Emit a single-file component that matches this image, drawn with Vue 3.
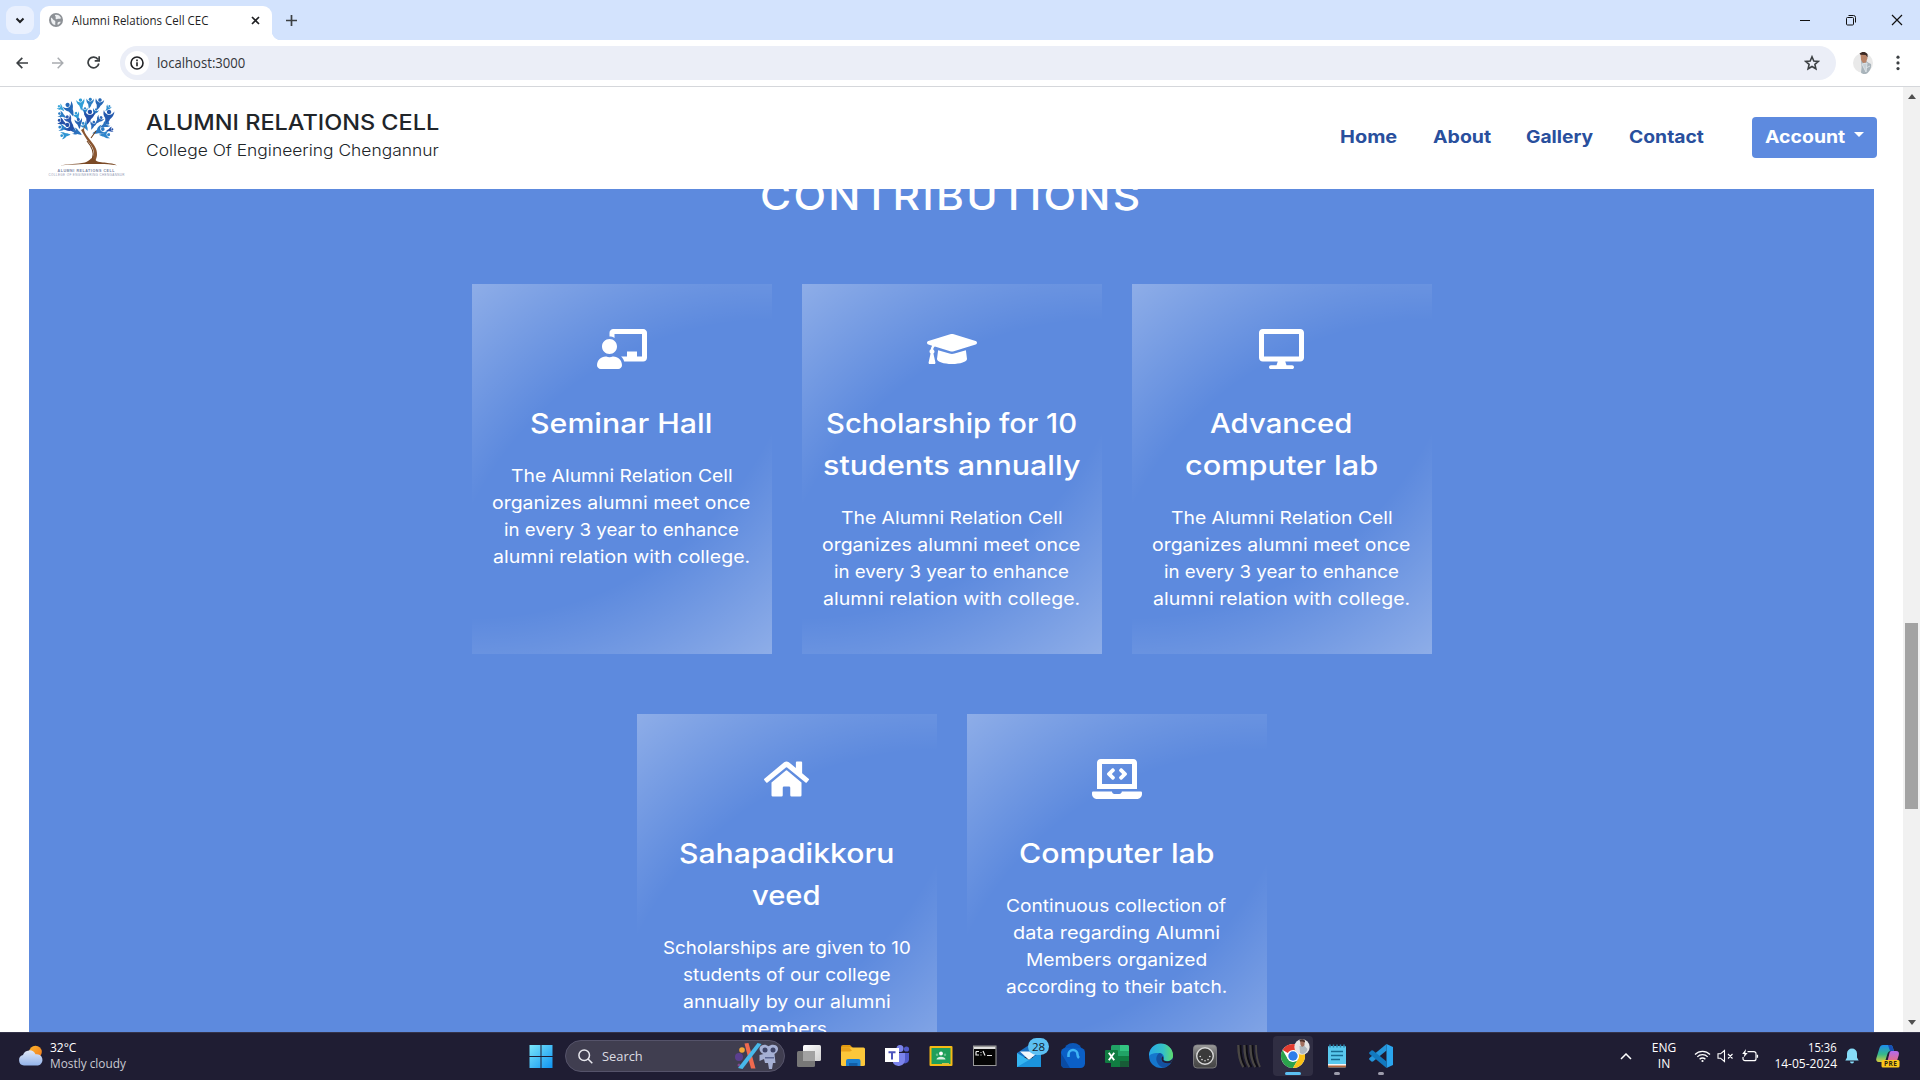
<script setup>
// Stretches a line of text horizontally to a given width
const vFit = {
  mounted(el, { value }) {
    const natural = el.offsetWidth
    if (!natural || !value) return
    el.style.transform = `scaleX(${value / natural})`
    el.style.marginRight = `${value - natural}px`
  },
}

const links = [
  { label: 'Home', w: 57 },
  { label: 'About', w: 58 },
  { label: 'Gallery', w: 67 },
  { label: 'Contact', w: 75 },
]

const alumniMeet = [
  { t: 'The Alumni Relation Cell', w: 222 },
  { t: 'organizes alumni meet once', w: 258 },
  { t: 'in every 3 year to enhance', w: 235 },
  { t: 'alumni relation with college.', w: 257 },
]

const rows = [
  [
    {
      vw: 640,
      icon: 'M208 352c-2.39 0-4.78.35-7.06 1.09C187.98 357.3 174.35 360 160 360c-14.35 0-27.98-2.7-40.95-6.91-2.28-.74-4.66-1.09-7.05-1.09C49.94 352-.33 402.48 0 464.62.14 490.88 21.73 512 48 512h224c26.27 0 47.86-21.12 48-47.38.33-62.14-49.94-112.62-112-112.62zm-48-32c53.02 0 96-42.98 96-96s-42.98-96-96-96-96 42.98-96 96 42.98 96 96 96zM592 0H208c-26.47 0-48 22.25-48 49.59V96c23.42 0 45.1 6.78 64 17.8V64h352v288h-64v-64H384v64h-76.24c19.1 16.69 33.12 38.73 39.69 64H592c26.47 0 48-22.25 48-49.59V49.59C640 22.25 618.47 0 592 0z',
      title: [{ t: 'Seminar Hall', w: 182 }],
      text: alumniMeet,
    },
    {
      vw: 640,
      icon: 'M622.34 153.2L343.4 67.5c-15.2-4.67-31.6-4.67-46.79 0L17.66 153.2c-23.54 7.23-23.54 38.36 0 45.59l48.63 14.94c-10.67 13.19-17.23 29.28-17.88 46.9C38.78 266.15 32 276.11 32 288c0 10.78 5.68 19.85 13.86 25.65L20.33 428.53C18.11 438.52 25.71 448 35.94 448h56.11c10.24 0 17.84-9.48 15.62-19.47L82.14 313.65C90.32 307.85 96 298.78 96 288c0-11.57-6.47-21.25-15.66-26.87.76-15.02 8.44-28.3 20.69-36.72L296.6 284.5c9.06 2.78 26.44 6.25 46.79 0l278.95-85.7c23.55-7.24 23.55-38.36 0-45.6zM352.79 315.09c-28.53 8.76-52.84 3.92-65.59 0l-145.02-44.55L128 384c0 35.35 85.96 64 192 64s192-28.65 192-64l-14.18-113.47-145.03 44.56z',
      title: [{ t: 'Scholarship for 10', w: 251 }, { t: 'students annually', w: 257 }],
      text: alumniMeet,
    },
    {
      vw: 576,
      icon: 'M528 0H48C21.5 0 0 21.5 0 48v320c0 26.5 21.5 48 48 48h192l-16 48h-72c-13.3 0-24 10.7-24 24s10.7 24 24 24h272c13.3 0 24-10.7 24-24s-10.7-24-24-24h-72l-16-48h192c26.5 0 48-21.5 48-48V48c0-26.5-21.5-48-48-48zm-16 352H64V64h448v288z',
      title: [{ t: 'Advanced', w: 142 }, { t: 'computer lab', w: 193 }],
      text: alumniMeet,
    },
  ],
  [
    {
      vw: 576,
      icon: 'M280.37 148.26L96 300.11V464a16 16 0 0 0 16 16l112.06-.29a16 16 0 0 0 15.92-16V368a16 16 0 0 1 16-16h64a16 16 0 0 1 16 16v95.64a16 16 0 0 0 16 16.05L464 480a16 16 0 0 0 16-16V300L295.67 148.26a12.19 12.19 0 0 0-15.3 0zM571.6 251.47L488 182.56V44.05a12 12 0 0 0-12-12h-56a12 12 0 0 0-12 12v72.61L318.47 43a48 48 0 0 0-61 0L4.34 251.47a12 12 0 0 0-1.6 16.9l25.5 31A12 12 0 0 0 45.15 301l235.22-193.74a12.19 12.19 0 0 1 15.3 0L530.9 301a12 12 0 0 0 16.9-1.6l25.5-31a12 12 0 0 0-1.7-16.93z',
      title: [{ t: 'Sahapadikkoru', w: 215 }, { t: 'veed', w: 69 }],
      text: [
        { t: 'Scholarships are given to 10', w: 248 },
        { t: 'students of our college', w: 208 },
        { t: 'annually by our alumni', w: 208 },
        { t: 'members.', w: 92 },
      ],
    },
    {
      vw: 640,
      icon: 'M255.03 261.65c6.25 6.25 16.38 6.25 22.63 0l11.31-11.31c6.25-6.25 6.25-16.38 0-22.63L253.25 192l35.71-35.72c6.25-6.25 6.25-16.38 0-22.63l-11.31-11.31c-6.25-6.25-16.38-6.25-22.63 0l-58.34 58.34c-6.25 6.25-6.25 16.38 0 22.63l58.35 58.34zm96.01-11.3l11.31 11.31c6.25 6.25 16.38 6.25 22.63 0l58.34-58.34c6.25-6.25 6.25-16.38 0-22.63l-58.34-58.34c-6.25-6.25-16.38-6.25-22.63 0l-11.31 11.31c-6.25 6.25-6.25 16.38 0 22.63L386.75 192l-35.71 35.72c-6.25 6.25-6.25 16.38 0 22.63zM624 416H381.54c-.74 19.81-14.71 32-32.74 32H288c-18.69 0-33.02-17.47-32.77-32H16c-8.8 0-16 7.2-16 16v16c0 35.2 28.8 64 64 64h512c35.2 0 64-28.8 64-64v-16c0-8.8-7.2-16-16-16zM576 48c0-26.4-21.6-48-48-48H112C85.6 0 64 21.6 64 48v336h512V48zm-64 272H128V64h384v256z',
      title: [{ t: 'Computer lab', w: 196 }],
      text: [
        { t: 'Continuous collection of', w: 220 },
        { t: 'data regarding Alumni', w: 207 },
        { t: 'Members organized', w: 181 },
        { t: 'according to their batch.', w: 221 },
      ],
    },
  ],
]

// Leaf figures of the logo: x, y, rotation, scale, colour
const leaves = [
  [33, 8, -8, 1.3, '#2f9fd8'], [42, 7, 5, 1.2, '#2b7fc4'], [51, 8, 14, 1.35, '#2767b5'],
  [22, 13, -30, 1.6, '#2569b8'], [13, 12, -50, 0.9, '#37a5da'], [60, 12, 35, 0.8, '#2f8fd0'],
  [14, 19, -60, 1, '#2b7cc4'], [37, 15, 0, 0.9, '#2d89cc'], [47, 16, 25, 0.9, '#2c79c2'],
  [41, 21, 10, 1.7, '#2450a8'], [29, 20, -20, 1, '#2d9bd6'], [60, 21, 12, 1.7, '#2459ae'],
  [21, 24, -30, 1.2, '#2c5bb0'], [14, 26, -60, 1.1, '#2450a8'], [51, 24, 40, 1.1, '#2b68b8'],
  [31, 27, -10, 1.2, '#2763b4'], [37, 30, -35, 1.1, '#2d87cc'], [45, 29, 15, 1, '#2a6abb'],
  [15, 32, -75, 1.1, '#2c83ca'], [23, 32, -50, 1.6, '#2450a8'], [29, 36, -65, 1.1, '#2b73bf'],
  [17, 39, -100, 1.1, '#2f95d3'], [57, 29, 60, 1.1, '#2b73bf'], [51, 35, 65, 1.4, '#2c7bc4'],
  [57, 39, 85, 1.2, '#2f86cc'], [62, 34, 75, 0.8, '#2450a8'],
]
</script>

<template>
  <div class="screen">
    <div class="tabstrip">
      <div class="tab-search">
        <svg width="10" height="7" viewBox="0 0 10 7"><path d="M1.5 1.5 5 5l3.500-3.500" fill="none" stroke="#202124" stroke-width="2" /></svg>
      </div>
      <div class="tab">
        <svg class="globe" width="14" height="14" viewBox="0 0 14 14">
          <circle cx="7" cy="7" r="7" fill="#8d9196" />
          <path d="M2 4.500c2 1 2 2.500 3.500 3s.5 2 .8 4.500C3.500 12 1.600 9 2 4.500zM6 2c2.500-.8 5 .5 6 3-1 1.500-2.500.2-3.600 1-1.200.8-2.200-.3-1.700-1.400C7.400 3.300 5.400 3 6 2zM8.500 10c.5-1.300 2-1.500 3.300-1.300C11 10.500 10 11.300 8.700 12z" fill="#eef0f2" />
        </svg>
        <div class="tab-title"><span v-fit="136" class="fit">Alumni Relations Cell CEC</span></div>
        <svg class="tab-close" width="9" height="9" viewBox="0 0 9 9"><path d="m1 1 7 7m0-7L1 8" stroke="#202124" stroke-width="1.700" /></svg>
      </div>
      <svg class="new-tab" width="11" height="11" viewBox="0 0 11 11"><path d="M5.500 0v11M0 5.500h11" stroke="#3c4043" stroke-width="1.700" /></svg>
      <div class="win">
        <svg width="12" height="12" viewBox="0 0 12 12"><path d="M1 6.500h10" stroke="#111" /></svg>
        <svg width="12" height="12" viewBox="0 0 12 12" fill="none" stroke="#111"><rect x="1.500" y="3.500" width="7" height="7.500" rx="1" /><path d="M3.500 1.500H8.500a2 2 0 0 1 2 2V8.500" /></svg>
        <svg width="12" height="12" viewBox="0 0 12 12"><path d="m1 1 10 10m0-10L1 11" stroke="#111" stroke-width="1.200" /></svg>
      </div>
    </div>

    <div class="toolbar">
      <svg width="12" height="12" viewBox="0 0 12 12" fill="none" stroke="#3c4043" stroke-width="1.700"><path d="M12 6H1.200M6.300.8 1.200 6l5.100 5.200" /></svg>
      <svg class="fwd" width="12" height="12" viewBox="0 0 12 12" fill="none" stroke="#a9acb0" stroke-width="1.500"><path d="M0 6h10.800M5.700.8 10.800 6l-5.100 5.200" /></svg>
      <svg class="reload" width="13" height="13" viewBox="0 0 13 13" fill="none" stroke="#3c4043" stroke-width="1.700"><path d="M11.800 7.500A5.400 5.400 0 1 1 11 3.500M12.200.3v4.500H7.700" /></svg>
      <div class="omnibox">
        <div class="info">
          <svg width="14" height="14" viewBox="0 0 14 14"><circle cx="7" cy="7" r="6" fill="none" stroke="#202124" stroke-width="1.600" /><path d="M6.200 6.200h1.600v4H6.200zM6.200 3.600h1.600v1.600H6.200z" fill="#202124" /></svg>
        </div>
        <div class="url"><span v-fit="88" class="fit">localhost:3000</span></div>
        <svg class="star" width="16" height="16" viewBox="0 0 16 16"><path d="m8 1.800 1.800 4.200 4.500.4-3.400 3 1 4.400L8 11.500l-3.900 2.300 1-4.400-3.400-3 4.500-.4z" fill="none" stroke="#3c4043" stroke-width="1.600" /></svg>
      </div>
      <svg class="avatar" width="22" height="24" viewBox="0 0 22 24">
        <circle cx="11" cy="12" r="10" fill="#e9e9e9" />
        <path d="M9 9.500 13 9l3 2.500 3 1.500c.7 4-1.500 7.500-4 9.500-3 1-5 .5-6-1l.6-5z" fill="#a9b4bb" />
        <path d="m10 13 5-1-1 9zM14 17l4-2" stroke="#dbe1e5" stroke-width="1" fill="#c7d0d6" />
        <path d="M8.500 3h5.500l1.500 4-1.500 4.500-3 .5-2-3z" fill="#b98468" />
        <path d="M7.500 2.500c2-2 6-2.300 8 .5l.2 3.500-2-2.500-5.200-.3z" fill="#3d2a24" />
      </svg>
      <svg class="kebab" width="4" height="16" viewBox="0 0 4 16" fill="#3c4043"><circle cx="2" cy="2.200" r="1.600" /><circle cx="2" cy="7.900" r="1.600" /><circle cx="2" cy="13.600" r="1.600" /></svg>
    </div>

    <div class="viewport">
      <div class="page">
        <header class="site-header">
          <svg class="logo" width="78" height="84" viewBox="0 0 78 84">
            <g v-for="(l, i) in leaves" :key="i" :transform="`translate(${l[0]} ${l[1]}) rotate(${l[2]}) scale(${l[3]})`" :fill="l[4]">
              <circle cx="0" cy="-3" r="1.300" />
              <path d="M-3.200-3.500C-2.400-1.800-1.200-1.400 0-1.200 1.300-1.500 2.400-2.500 3-4 3.300-1.200 2 .2 1.400 1 1.200 2.500.4 3.800-.6 5-.9 3.300-1.200 2-1.500.9-2.700 0-3.400-1.500-3.200-3.500z" />
            </g>
            <path d="M33 34c3 5 5 9 8 12.500 4 4.500 6 9.500 4 14-1 3-3.500 5-6 7h8c-.5-2 2-5 2-9 .3-6-3.500-10-6.500-14C39.500 40.500 37 38 36 34l1-5-1.600 3.500z" fill="#8a5630" />
            <path d="M39 45c5 6 7.500 12 5.500 17-.8 2.500-2 4-3.500 5.500M43 42l5-7" fill="none" stroke="#6f411f" stroke-width="1.100" />
            <path d="M12 69.500c8-1.800 17-1.300 25-3 2.500-.8 4.500-2.500 6-4 1.500 0 3 0 4 1 2 3 7 2.600 11 3.300 4 .6 8 .9 11 2.400-8-1-14-1.500-20-1.200-13-.2-25 .3-37 1.500z" fill="#7b4a26" />
            <text x="9.500" y="75.500" textLength="57" font-size="3.600" font-weight="700" fill="#7684a6">ALUMNI RELATIONS CELL</text>
            <text x="0.500" y="80" textLength="76" font-size="3" fill="#8f97b2">COLLEGE OF ENGINEERING CHENGANNUR</text>
          </svg>
          <div class="brand">
            <div class="brand-name"><span v-fit="293" class="fit">ALUMNI RELATIONS CELL</span></div>
            <div class="brand-sub"><span v-fit="293" class="fit">College Of Engineering Chengannur</span></div>
          </div>
          <nav>
            <a v-for="l in links" :key="l.label"><span v-fit="l.w" class="fit">{{ l.label }}</span></a>
          </nav>
          <button class="account"><span v-fit="80" class="fit">Account</span><i class="caret"></i></button>
        </header>
        <main>
          <section class="contributions">
            <h2><span v-fit="382" class="fit">CONTRIBUTIONS</span></h2>
            <div v-for="(row, r) in rows" :key="r" class="row">
              <article v-for="(c, i) in row" :key="i" class="card">
                <svg class="card-icon" :width="c.vw / 12.8" height="40" :viewBox="`0 0 ${c.vw} 512`"><path :d="c.icon" fill="#fff" /></svg>
                <h3><div v-for="l in c.title" :key="l.t"><span v-fit="l.w" class="fit">{{ l.t }}</span></div></h3>
                <div class="copy"><div v-for="l in c.text" :key="l.t"><span v-fit="l.w" class="fit">{{ l.t }}</span></div></div>
              </article>
            </div>
          </section>
        </main>
      </div>
      <div class="scrollbar">
        <svg width="8" height="5" viewBox="0 0 8 5"><path d="M4 0l4 5H0z" fill="#505050" /></svg>
        <div class="track"><div class="thumb"></div></div>
        <svg width="8" height="5" viewBox="0 0 8 5"><path d="M4 5 0 0h8z" fill="#505050" /></svg>
      </div>
    </div>

    <div class="taskbar">
      <div class="weather">
        <svg width="26" height="22" viewBox="0 0 26 22">
          <defs>
            <linearGradient id="cloud" x1="0" y1="0" x2="0" y2="1"><stop offset="0" stop-color="#dfe8f8" /><stop offset="1" stop-color="#93b3ea" /></linearGradient>
            <linearGradient id="sun" x1="0" y1="0" x2="1" y2="1"><stop offset="0" stop-color="#fdb62c" /><stop offset="1" stop-color="#f0781e" /></linearGradient>
          </defs>
          <circle cx="17.500" cy="7" r="6.300" fill="url(#sun)" />
          <path d="M6 20.500a5.300 5.300 0 0 1-1-10.400 6.700 6.700 0 0 1 12.500-.8 5.700 5.700 0 0 1 2.500 11.200z" fill="url(#cloud)" />
        </svg>
        <div class="weather-text">
          <div><span v-fit="26" class="fit">32°C</span></div>
          <div class="dim"><span v-fit="76" class="fit">Mostly cloudy</span></div>
        </div>
      </div>

      <svg class="start" width="24" height="24" viewBox="0 0 24 24">
        <defs><linearGradient id="win" x1="0" y1="0" x2="1" y2="1"><stop offset="0" stop-color="#7be7fb" /><stop offset="1" stop-color="#0f93f0" /></linearGradient></defs>
        <path d="M0.500 1h11v11h-11zM12.500 1h11v11h-11zM0.500 13h11v11h-11zM12.500 13h11v11h-11z" fill="url(#win)" />
      </svg>

      <div class="search">
        <svg width="15" height="15" viewBox="0 0 15 15" fill="none" stroke="#e8e8ee" stroke-width="1.500"><circle cx="6.200" cy="6.200" r="5.300" /><path d="m10 10 4.300 4.300" /></svg>
        <div class="search-label"><span v-fit="41" class="fit">Search</span></div>
        <svg class="doodle" width="46" height="28" viewBox="0 0 46 28">
          <circle cx="8" cy="8" r="2.800" fill="#f3a83a" /><circle cx="5" cy="15" r="4" fill="#5b3f8f" /><circle cx="5" cy="23" r="1.500" fill="#7d4b8c" />
          <path d="m10.500 1.500 4-.5 7 25.500h-4.500z" fill="#f0694f" />
          <path d="m23.500 1 4 1L8.500 27 4 26z" fill="#48b9ea" />
          <path d="M26 5c2-3 6-3 8.500-.8C37 2 42 2 43.500 5c1.500 3-.5 6-3 7l1 9H31l-1-4-4.500 2v-6l4-1c-3-1-5-4-3.500-7zM34 21h5l-1 6h-3z" fill="#a6b0d4" />
          <circle cx="31" cy="8" r="2.500" fill="#3e4468" /><circle cx="39" cy="8" r="2.500" fill="#3e4468" /><path d="M31 15h9v1.500h-9z" fill="#5d6794" />
        </svg>
      </div>

      <div class="apps">
        <div class="app"><svg width="26" height="26" viewBox="0 0 26 26"><defs><linearGradient id="tv" x1="0" y1="0" x2="1" y2="1"><stop offset="0" stop-color="#fff" /><stop offset="1" stop-color="#cfcfcf" /></linearGradient></defs><rect x="7" y="2" width="18" height="16" rx="1.500" fill="url(#tv)" /><rect x="1" y="8" width="18" height="16" rx="1.500" fill="#777" /><path d="M7 8h12v10H7z" fill="#a2a2a2" /></svg></div>
        <div class="app"><svg width="26" height="26" viewBox="0 0 26 26"><path d="M1 4a2 2 0 0 1 2-2h7l3 3h-2v5H1z" fill="#e39a10" /><rect x="1" y="4.500" width="24" height="18.500" rx="1.500" fill="#fcc73a" /><path d="M1 4.500h8l3 3-2 1H1z" fill="#e9a21b" /><path d="M6 23v-5a2 2 0 0 1 2-2h10.500a2 2 0 0 1 2 2v5z" fill="#1c7fd0" /><path d="M9 20h8.500v3H9z" fill="#125fa8" /></svg></div>
        <div class="app"><svg width="26" height="26" viewBox="0 0 26 26"><circle cx="16" cy="5.500" r="3.500" fill="#7b83eb" /><circle cx="22.500" cy="6" r="2.600" fill="#5059c9" /><path d="M18 10h7v6.500a4 4 0 0 1-5 3.800z" fill="#5059c9" /><path d="M9 10h12v7a6.500 6.500 0 0 1-12 3z" fill="#7b83eb" /><rect x="1" y="5" width="14" height="14" fill="#fff" /><path d="M4.500 8.200h7v2H9v6.300H7v-6.300H4.500z" fill="#4b53bc" /></svg></div>
        <div class="app"><svg width="26" height="26" viewBox="0 0 26 26"><rect x="1.500" y="3" width="23" height="20" rx="1" fill="#f5ba15" /><rect x="3.500" y="5" width="19" height="16" fill="#1f9f5b" /><circle cx="13" cy="10.500" r="1.900" fill="#fff" /><circle cx="9" cy="11.800" r="1.200" fill="#6cc191" /><circle cx="17" cy="11.800" r="1.200" fill="#6cc191" /><path d="M8.500 16.500c0-2 2.500-2.800 4.500-2.800s4.500.8 4.500 2.800z" fill="#d9f0e2" /><path d="M14 20h7v1.500h-7z" fill="#d3c14a" /></svg></div>
        <div class="app"><svg width="26" height="26" viewBox="0 0 26 26"><rect x="1.500" y="3" width="22.500" height="19.500" fill="#050505" stroke="#9a9a9a" /><path d="M2 3.500h21.500v2.500H2z" fill="#dedede" /><path d="M4 8.500h3M4 8.500v3.500h3M8.500 9.500h1M8.500 12h1M11 8l2 4.500M15 12.500h5" stroke="#e8e8e8" stroke-width="1.200" fill="none" /></svg></div>
        <div class="app"><svg width="26" height="26" viewBox="0 0 26 26"><path d="m1 10 12-8 12 8v4H1z" fill="#1a6fc0" /><path d="M4 8.500h19L13 17z" fill="#f2f7fc" /><path d="M1 10l12 7 12-7v14H1z" fill="#35b5f1" /><path d="M1 24 25 10v14z" fill="#1b93dc" /></svg><span class="badge">28</span></div>
        <div class="app"><svg width="26" height="26" viewBox="0 0 26 26"><path d="M4 8a9 8 0 0 1 18 0" fill="#0b57b8" /><rect x="1" y="5" width="24" height="20" rx="4.500" fill="#0b5fc6" /><path d="M1 10l9 15H5a4 4 0 0 1-4-4z" fill="#0a4ba3" /><path d="M8.500 14v-2.500a4.500 4.500 0 0 1 9 0c0 2 1 3 1.500 3.500" fill="none" stroke="#3fb4f5" stroke-width="2.600" /></svg></div>
        <div class="app"><svg width="26" height="26" viewBox="0 0 26 26"><rect x="7" y="2" width="18" height="22" rx="1.500" fill="#21a366" /><path d="M16 2h7.500A1.500 1.500 0 0 1 25 3.500V8h-9z" fill="#33c481" /><path d="M7 13h9v11H8.500A1.500 1.500 0 0 1 7 22.500zM16 13h9v5h-9z" fill="#107c41" /><path d="M16 18h9v4.500a1.500 1.500 0 0 1-1.500 1.500H16z" fill="#185c37" /><rect x="1" y="7" width="13" height="13" rx="1" fill="#107c41" /><path d="m4.800 9.700 5.400 7.600m0-7.600-5.400 7.600" stroke="#fff" stroke-width="1.900" /></svg></div>
        <div class="app"><svg width="26" height="26" viewBox="0 0 26 26"><defs><linearGradient id="eg" x1="0" y1="0" x2="1" y2="0"><stop offset="0" stop-color="#28a9e8" /><stop offset=".6" stop-color="#35c1c6" /><stop offset="1" stop-color="#5fdc6a" /></linearGradient></defs><circle cx="13" cy="13" r="12" fill="#1577cd" /><path d="M1 13A12 12 0 0 1 25 12c.3 4-2.500 6-6 6-2.500 0-4-1-3.500-2 1.500-2 0-5.500-4-6C6.500 9.500 2 11 1 13z" fill="url(#eg)" /><path d="M11.500 10c-3 2-4 5.500-2.500 9 1.200 3 4 5.500 7 5.600 3-.6 5.500-2.600 7-5.100-3.500 1.500-8 1-9.500-1.500-1-2-.5-4 1-5.500-.5-1.500-1.500-2.300-3-2.500z" fill="#1451a0" /><path d="M15.500 16c-.5 1 1 2.500 4 2.300 2.500-.3 4.500-1.500 5.300-3.300-.3 2-1 3.500-2 4.700-4 1.300-8.500.5-9.300-2.700-.3-2 .2-3.200 1.200-3.800.8 1 .9 2 .8 2.800z" fill="#241f36" /></svg></div>
        <div class="app"><svg width="26" height="26" viewBox="0 0 26 26"><defs><linearGradient id="din" x1="0" y1="0" x2="0" y2="1"><stop offset="0" stop-color="#9c9c9c" /><stop offset=".5" stop-color="#5c5c5c" /><stop offset="1" stop-color="#444" /></linearGradient></defs><rect x="1.500" y="2" width="23" height="23" rx="3.500" fill="url(#din)" stroke="#888" stroke-width=".8" /><circle cx="13" cy="13" r="8.300" fill="#3a3a3a" stroke="#d8d8d8" stroke-width="1.400" /><g fill="#e0e0e0"><circle cx="8.200" cy="13.500" r=".8" /><circle cx="17.800" cy="13.500" r=".8" /><circle cx="10" cy="16.600" r=".8" /><circle cx="16" cy="16.600" r=".8" /><circle cx="13" cy="17.800" r=".8" /></g></svg></div>
        <div class="app"><svg width="26" height="26" viewBox="0 0 26 26" fill="none" stroke="#4a4744" stroke-width="2.600"><path d="M2.500 2c0 8 .5 15 5 22M8.500 2c0 8 .5 15 5 22M14.500 2c0 8 .5 15 5 22" /><path d="M20 2c0 8 .5 15 4 22" stroke-width="1.800" /><g stroke="#0d0c12" stroke-width="1.800"><path d="M4.500 2c0 8 .5 15 5 22M10.500 2c0 8 .5 15 5 22M16.500 2c0 8 .5 15 5 22" /></g></svg></div>
        <div class="app active">
          <svg width="26" height="26" viewBox="0 0 26 26"><circle cx="13" cy="13" r="12" fill="#fff" /><path d="M13 13 2.600 7A12 12 0 0 1 23.400 7H13z" fill="#e33b2e" /><path d="M2.600 7A12 12 0 0 0 13 25l5.200-9-5.200 3-5.200-3z" fill="#2ba24c" /><path d="M23.400 7A12 12 0 0 1 13 25l5.200-9L18.200 10 13 7z" fill="#fbc116" /><circle cx="13" cy="13" r="6" fill="#fff" /><circle cx="13" cy="13" r="4.700" fill="#2f7de9" /></svg>
          <svg class="profile" width="16" height="16" viewBox="0 0 16 16"><circle cx="8" cy="8" r="7.700" fill="#e6e4e4" /><path d="M5.500 7h5l3 3c-.5 3-3 5-5.500 5l-2-1z" fill="#b0b8bf" /><path d="M6 1.500h4.500v5L8 8 6.500 6z" fill="#a26f5e" /><path d="M5.500 1.200C7-.2 10 0 11 2v1.500L8.500 2.500H6z" fill="#4d322c" /></svg>
          <i class="mark wide"></i>
        </div>
        <div class="app"><svg width="26" height="26" viewBox="0 0 26 26"><rect x="4" y="3" width="18" height="21.500" rx="1" fill="#59c8ee" /><path d="M4 22h18v1.500a1 1 0 0 1-1 1H5a1 1 0 0 1-1-1z" fill="#b5653a" /><path d="M4 21h18v1.500H4z" fill="#f6f6f6" /><path d="M7 8.500h12M7 12.500h12M7 16.500h9" stroke="#176b93" stroke-width="1.600" /><path d="M6 1.500v3M9.500 1.500v3M13 1.500v3M16.500 1.500v3M20 1.500v3" stroke="#2c86ad" stroke-width="1.500" /></svg><i class="mark"></i></div>
        <div class="app"><svg width="26" height="26" viewBox="0 0 26 26"><path d="M18.500 1 25 4v18l-6.500 3z" fill="#2aa5ee" /><path d="M18.500 1v6.500L5 18.500l-1.200.2L1.200 16.500v-1.200z" fill="#2496dc" /><path d="M18.500 25v-6.500L5 7.500l-1.200-.2L1.200 9.500v1.200z" fill="#1279bf" /></svg><i class="mark"></i></div>
      </div>

      <div class="tray">
        <svg class="chev" width="12" height="7" viewBox="0 0 12 7"><path d="m1 6 5-5 5 5" fill="none" stroke="#fff" stroke-width="1.500" /></svg>
        <div class="lang"><div><span v-fit="24" class="fit">ENG</span></div><div><span v-fit="12" class="fit">IN</span></div></div>
        <svg class="wifi" width="17" height="14" viewBox="0 0 17 14" fill="none" stroke="#fff" stroke-width="1.300"><path d="M1 5.500a10.500 10.500 0 0 1 15 0M3.300 7.900a7.300 7.300 0 0 1 10.400 0M5.600 10.200a4.100 4.100 0 0 1 5.800 0" /><circle cx="8.500" cy="12" r="1.100" fill="#fff" stroke="none" /></svg>
        <svg class="vol" width="17" height="14" viewBox="0 0 17 14" fill="none" stroke="#fff" stroke-width="1.100"><path d="M1 4.800h2.500L7.500 1.500v11L3.500 9.200H1zM11 5l4.500 4.500m0-4.500L11 9.500" /></svg>
        <svg class="bat" width="18" height="14" viewBox="0 0 18 14" fill="none" stroke="#fff" stroke-width="1.200"><path d="M6.500 2.700H13A2 2 0 0 1 15 4.700v5a2 2 0 0 1-2 2H4a2 2 0 0 1-2-2V8M16.500 5.700v3" /><path d="M5 0 1.200 5h2.300L2.700 8.500 6.700 4H4.300z" fill="#fff" stroke="none" /></svg>
        <div class="clock"><div><span v-fit="29" class="fit">15:36</span></div><div><span v-fit="63" class="fit">14-05-2024</span></div></div>
        <svg class="bell" width="14" height="16" viewBox="0 0 14 16"><path d="M7 .5a5 5 0 0 1 5 5v4l1.700 3H.3l1.700-3v-4a5 5 0 0 1 5-5zM5 13.500h4a2 2 0 0 1-4 0z" fill="#86dcf8" /></svg>
        <svg class="copilot" width="26" height="25" viewBox="0 0 26 25">
          <defs>
            <linearGradient id="cpa" x1="0" y1="0" x2="0" y2="1"><stop offset="0" stop-color="#1d8df0" /><stop offset=".55" stop-color="#36b98a" /><stop offset="1" stop-color="#d9cf3c" /></linearGradient>
            <linearGradient id="cpb" x1="0" y1="0" x2="0" y2="1"><stop offset="0" stop-color="#b26af0" /><stop offset="1" stop-color="#f0706c" /></linearGradient>
          </defs>
          <path d="M8 1h7c2 0 2.500 1.200 3 3l1 3h-3c-2 0-3 1-3.600 3l-1.700 5.500c-.5 1.500-1.200 2.500-3 2.500H4c-2.500 0-3.300-1.700-2.600-4L4.500 4C5.200 2 6.200 1 8 1z" fill="url(#cpa)" />
          <path d="M13 1h2c2 0 2.500 1.200 3 3l1 3h-4z" fill="#174fb5" />
          <path d="M16.500 7H21c2.500 0 3.400 1.500 2.800 4l-2.500 8H12l2.500-10c.3-1.300 1-2 2-2z" fill="url(#cpb)" />
          <rect x="6.500" y="16" width="18" height="7.500" rx="1.500" fill="#fcc81c" />
          <text x="9" y="22.200" textLength="13" font-size="6.500" font-weight="700" fill="#2a2412">PRE</text>
        </svg>
      </div>
    </div>
  </div>
</template>

<style>
body { overflow: hidden; }
</style>

<style scoped>
* { box-sizing: border-box; }
.screen { width: 1920px; height: 1080px; display: flex; flex-direction: column; overflow: hidden; background: #fff; font-family: "Open Sans", "Noto Sans", sans-serif; }
.screen svg { display: block; flex: none; }
.fit { display: inline-block; white-space: nowrap; transform-origin: 0 50%; }

.tabstrip { height: 40px; flex: none; background: #d3e3fd; display: flex; align-items: center; }
.tab-search { width: 28px; height: 28px; margin-left: 6px; border-radius: 9px; background: #e9f0fe; display: flex; align-items: center; justify-content: center; }
.tab { align-self: flex-end; position: relative; width: 232px; height: 34px; margin-left: 6px; padding: 0 12px 6px 9px; background: #fff; border-radius: 9px 9px 0 0; display: flex; align-items: center; }
.tab::before, .tab::after { content: ""; position: absolute; bottom: 0; width: 9px; height: 9px; }
.tab::before { left: -9px; background: radial-gradient(circle at 0 0, transparent 9px, #fff 9.5px); }
.tab::after { right: -9px; background: radial-gradient(circle at 100% 0, transparent 9px, #fff 9.5px); }
.tab-title { margin-left: 9px; margin-top: 1px; font-size: 12px; color: #1f1f1f; line-height: 16px; }
.tab-close { margin-left: auto; }
.new-tab { margin-left: 14px; }
.win { margin-left: auto; margin-right: 17px; display: flex; gap: 34px; }

.toolbar { height: 47px; flex: none; border-bottom: 1px solid #d5d7db; padding: 0 20px 1px 16px; display: flex; align-items: center; background: #fff; }
.fwd { margin-left: 24px; }
.reload { margin-left: 23px; }
.omnibox { width: 1716px; height: 34px; margin-left: 20px; padding: 0 16px 0 5px; border-radius: 17px; background: #ebeef7; display: flex; align-items: center; }
.info { width: 24px; height: 24px; border-radius: 50%; background: #fff; display: flex; align-items: center; justify-content: center; }
.url { margin-left: 8px; font-size: 14px; line-height: 20px; color: #33363a; }
.star { margin-left: auto; }
.avatar { margin-left: 16px; }
.kebab { margin-left: auto; }

.viewport { height: 945px; flex: none; display: flex; }
.page { width: 1903px; display: flex; flex-direction: column; overflow: hidden; font-family: Inter, "Liberation Sans", sans-serif; }
.site-header { height: 102px; flex: none; padding: 0 26px 2px 48px; display: flex; align-items: center; background: #fff; }
.logo { font-family: "Liberation Sans", sans-serif; margin-top: 2px; }
.brand { margin-left: 20px; margin-top: -3px; }
.brand-name { font-size: 21px; font-weight: 500; line-height: 30px; color: #212529; }
.brand-sub { font-size: 15.5px; font-weight: 300; line-height: 26px; color: #212529; }
nav { margin-left: auto; display: flex; gap: 35.5px; font-size: 17.5px; font-weight: 700; line-height: 27px; color: #294f9d; margin-top: -2px; }
.account { width: 125px; height: 41px; margin-left: 48px; padding: 0 0 2px 13px; border: 0; border-radius: 4px; background: #5d8adf; color: #fff; font: 700 17.5px/27px Inter, sans-serif; display: flex; align-items: center; }
.caret { margin-left: 9px; border: 5px solid transparent; border-top-color: #fff; border-bottom: 0; margin-top: -3px; }

main { flex: 1; min-height: 0; overflow: hidden; padding: 0 29px; }
.contributions { width: 1845px; height: 1100px; background: #5d8ade; color: #fff; text-align: center; display: flex; flex-direction: column; align-items: center; }
h2 { margin: -23.5px 0 0; height: 60px; font-size: 38.5px; font-weight: 550; line-height: 60px; letter-spacing: 2px; }
.row { display: flex; gap: 30px; margin-top: 60px; }
h2 + .row { margin-top: 58.5px; }
.card {
  width: 300px; height: 370px; padding-top: 45px; display: flex; flex-direction: column; align-items: center;
  background:
    radial-gradient(circle at 100% 100%, transparent 70%, rgba(255, 255, 255, 0.3) 100%),
    radial-gradient(circle at 0 0, transparent 70%, rgba(255, 255, 255, 0.3) 100%);
}
h3 { margin: 33px 0 18px; font-size: 27.5px; font-weight: 500; line-height: 42px; }
.copy { font-size: 17.5px; font-weight: 400; line-height: 27px; }

.scrollbar { width: 17px; background: #f1f1f1; display: flex; flex-direction: column; align-items: center; padding: 7px 0; }
.track { flex: 1; width: 13px; padding-top: 524px; }
.thumb { height: 186px; background: #a3a3a3; }

.taskbar { height: 48px; flex: none; display: flex; align-items: center; background: #1f1d33; border-top: 1px solid #34334a; padding-bottom: 1px; color: #fff; font-size: 12px; line-height: 16px; }
.weather { width: 529px; padding-left: 18px; display: flex; align-items: center; gap: 6px; }
.weather-text { margin-top: 0; }
.dim { color: #c9c9d2; }
.search { width: 220px; height: 32px; margin-left: 12px; padding: 0 4px 0 12px; border-radius: 16px; background: #403e50; border: 1px solid #55536a; display: flex; align-items: center; }
.search-label { margin-left: 9px; font-size: 13.5px; color: #dcdce2; }
.doodle { margin-left: auto; }
.apps { display: flex; align-items: center; margin-left: 2px; }
.app { position: relative; width: 44px; height: 40px; display: flex; align-items: center; justify-content: center; }
.active::before { content: ""; position: absolute; inset: 0 2px; border-radius: 4px; background: #302e43; }
.active svg { position: relative; }
.screen .profile { position: absolute; right: 5px; top: 3px; }
.badge { position: absolute; left: 21px; top: 2px; width: 21px; height: 17px; border-radius: 9px; background: #5cc0f3; color: #10202e; font-size: 11.5px; line-height: 17px; text-align: center; }
.mark { position: absolute; left: 19px; bottom: 1px; width: 6px; height: 3px; border-radius: 2px; background: #9d9cab; }
.mark.wide { left: 14px; width: 16px; background: #5cc0f3; }
.tray { margin-left: auto; display: flex; align-items: center; padding-right: 19px; }
.lang { width: 28px; margin-left: 18px; text-align: center; }
.wifi { margin-left: 16px; }
.vol { margin-left: 6px; }
.bat { margin-left: 7px; }
.clock { width: 66px; margin-left: 12px; text-align: right; }
.bell { margin-left: 8px; }
.copilot { margin-left: 16px; }
</style>
